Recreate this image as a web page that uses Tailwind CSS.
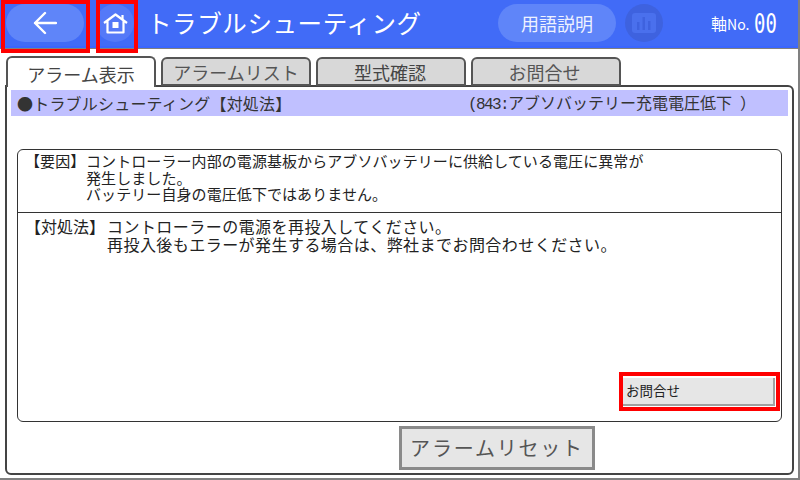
<!DOCTYPE html>
<html lang="ja">
<head>
    <meta charset="UTF-8">
    <title>トラブルシューティング</title>
    <script src="https://cdn.jsdelivr.net/npm/@tailwindcss/browser@4"></script>
</head>
<body class="w-[800px] h-[480px] overflow-hidden bg-white text-black font-['Noto_Sans_CJK_JP','Liberation_Sans',sans-serif]">
    <div class="relative w-[800px] h-[480px] border-r-2 border-b-2 border-[#808080] flex flex-col">

        <!-- header -->
        <header class="h-[48px] shrink-0 flex items-center bg-[#416bf7] border-b-2 border-[#3a66ff] text-white">
            <button class="ml-[6px] w-[78px] h-[38px] rounded-full bg-[#5f85f9] flex items-center justify-center">
                <svg width="24" height="24" viewBox="0 0 24 24" fill="none" stroke="#fff" stroke-width="2.4" stroke-linecap="round" stroke-linejoin="round"><path d="M23 12H2M12 2L2 12L12 22"/></svg>
            </button>
            <button class="ml-[12px] w-[38px] h-[38px] rounded-full bg-[#5479f8] flex items-center justify-center">
                <svg width="25" height="21" viewBox="0 0 25 21" fill="none" stroke="#fff" stroke-width="2.200" stroke-linejoin="round"><path d="M1 10L12.500 1.500L24 10M4.500 8V19.500H20.500V8"/><path d="M19.500 2V6.500"/><rect x="9.500" y="9" width="6" height="6" fill="#fff" stroke="none"/></svg>
            </button>
            <h1 class="ml-[13px] w-[351px] text-[24.500px] tracking-[0.6px] leading-none whitespace-nowrap">トラブルシューティング</h1>
            <button class="w-[118px] h-[38px] rounded-full bg-[#5f85f9] text-[18px] leading-none text-[#eef2ff]">用語説明</button>
            <div class="ml-[9px] w-[38px] h-[38px] rounded-full bg-[#3e62df] flex items-center justify-center">
                <svg width="24" height="20" viewBox="0 0 24 20"><rect x="0" y="0" width="24" height="20" rx="3" fill="#4a70ed"/><path d="M5 9h2.500v8H5zM10.500 4H13v13h-2.500zM16 8h2.500v9H16z" fill="#3e62df"/></svg>
            </div>
            <span class="ml-[48px] text-[16px] leading-none whitespace-nowrap">軸<span class="text-[14px]">No.</span></span>
            <span class="ml-[5px] font-['DejaVu_Sans_Mono',monospace] text-[27px] leading-none scale-x-70 origin-left">00</span>
        </header>
        <div class="h-px shrink-0 bg-[#808080]"></div>

        <!-- tabs -->
        <div class="h-[7px] shrink-0"></div>
        <nav class="relative z-10 h-[30px] shrink-0 flex pl-[6px] text-[18px] leading-none">
            <div class="w-[150px] h-[31px] pt-[2px] flex items-center justify-center bg-white border-2 border-b-0 border-[#555] rounded-t-[6px] text-[#444]">アラーム表示</div>
            <div class="ml-[5px] mt-[1px] w-[150px] h-[29px] flex items-center justify-center bg-[#d8d8d8] border-2 border-[#555] rounded-t-[6px] text-[#555]">アラームリスト</div>
            <div class="ml-[5px] mt-[1px] w-[150px] h-[29px] pr-[2px] flex items-center justify-center bg-[#d8d8d8] border-2 border-[#555] rounded-t-[6px] text-[#444]">型式確認</div>
            <div class="ml-[5px] mt-[1px] w-[150px] h-[29px] pr-[3px] flex items-center justify-center bg-[#d8d8d8] border-2 border-[#555] rounded-t-[6px] text-[#555]">お問合せ</div>
        </nav>

        <!-- panel -->
        <main class="ml-[5px] mt-[-1px] w-[789px] h-[390px] shrink-0 border-2 border-[#444] rounded-[6px] rounded-tl-none flex flex-col px-[4px] pt-[3px]">
            <div class="h-[26px] shrink-0 pl-[6px] bg-[#c0c0ff] flex items-center text-[16px] leading-none whitespace-nowrap text-[#333]">
                <span class="w-[451px] tracking-[0.2px]">●トラブルシューティング【対処法】</span>
                <span><span class="font-['Liberation_Mono',monospace] tracking-[-1.600px]">(843:</span>アブソバッテリー充電電圧低下<span class="ml-[8px]">）</span></span>
            </div>

            <section class="mt-[33px] mx-[6px] h-[273px] shrink-0 border border-[#333] rounded-[6px] flex flex-col">
                <div class="h-[63px] shrink-0 border-b border-[#333] pt-[3px] flex text-[15px] tracking-[0.08px] leading-[16.500px] text-[#222]">
                    <span class="pl-[7px] w-[68px] whitespace-nowrap">【要因】</span>
                    <p class="whitespace-pre-line">コントローラー内部の電源基板からアブソバッテリーに供給している電圧に異常が
                    発生しました。
                    バッテリー自身の電圧低下ではありません。</p>
                </div>
                <div class="relative flex-1 pt-[4px] flex text-[16px] leading-[18px] text-[#222]">
                    <span class="pl-[7px] w-[89px] whitespace-nowrap">【対処法】</span>
                    <p class="whitespace-pre-line tracking-[0.45px]">コントローラーの電源を再投入してください。
                    再投入後もエラーが発生する場合は、弊社までお問合わせください。</p>
                    <button class="absolute right-[6px] bottom-[15px] w-[153px] h-[28px] pl-[4px] text-left bg-[#e6e6e6] border-r-2 border-b-2 border-[#a0a0a0] text-[13.500px] leading-none">お問合せ</button>
                </div>
            </section>

            <div class="mt-[4px] ml-[388px] w-[196px] h-[44px] bg-[#e6e6e6] border-[3px] border-[#8a8a8a] flex items-center justify-center text-[20px] leading-none tracking-[1.800px] text-[#555]">アラームリセット</div>
        </main>

        <!-- red highlight frames -->
        <div class="absolute left-[1px] top-0 w-[89px] h-[53px] border-[4px] border-[#f00]"></div>
        <div class="absolute left-[96px] top-0 w-[42px] h-[53px] border-[4px] border-[#f00]"></div>
        <div class="absolute left-[619px] top-[372px] w-[161px] h-[39px] border-[4px] border-[#f00]"></div>
    </div>
</body>
</html>
